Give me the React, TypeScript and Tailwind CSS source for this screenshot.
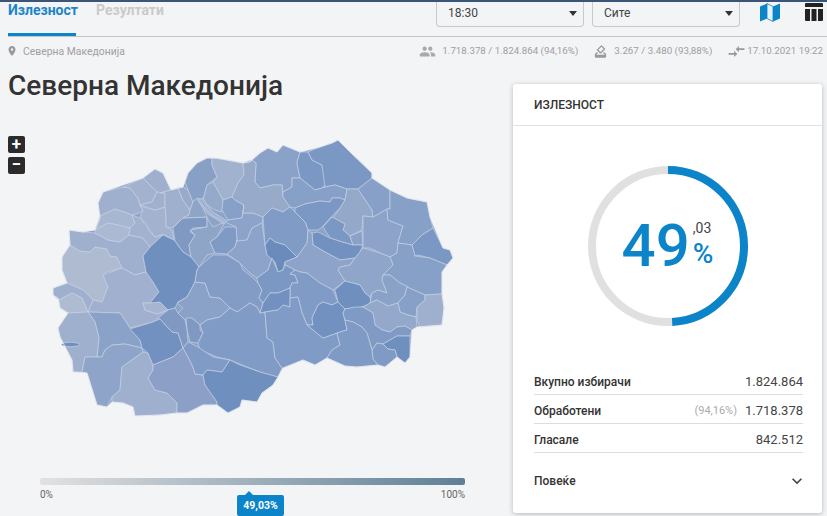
import { MdPlace, MdPeople, MdHowToVote, MdCompareArrows, MdKeyboardArrowDown } from "react-icons/md";

const OUTLINE = "69,230 83,232 95,230 100,218 98,203 103,192 123,185 143,178 155,169 163,173 171,190 183,187 188,173 197,163 207,158 217,158 227,160 243,163 250,162 252,160 260,153 268,148 277,152 283,145 300,152 320,147 332,143 338,140 350,152 372,173 372,178 390,190 407,198 427,202 430,217 443,248 450,250 453,258 447,265 442,272 442,293 444,308 442,325 417,327 412,330 410,357 405,363 397,357 385,367 378,365 357,367 345,366 327,358 315,365 303,360 283,368 278,377 273,385 262,393 257,402 242,400 240,407 228,413 217,405 203,405 187,413 177,413 160,415 135,416 133,407 123,403 112,402 107,407 97,405 87,373 73,372 72,360 60,337 58,328 68,313 60,308 58,298 53,295 53,288 67,283 62,270 62,257 70,245";

const REGIONS: [string, string][] = [
  ["#aebbd1", "62,257 70,245 80,251 90,252 95,247 107,249 110,256 117,257 122,268 107,272 103,275 108,287 102,302 93,300 83,290 67,283 62,270"],
  ["#9fb0ce", "53,288 67,283 83,290 93,300 88,312 82,298 72,293 59,300 53,295"],
  ["#aebbd1", "59,300 72,293 82,298 88,312 68,313 60,308"],
  ["#9fb0ce", "69,230 83,232 95,233 108,240 120,242 129,235 143,238 150,247 143,256 146,272 135,275 122,268 117,257 110,256 107,249 95,247 90,252 80,251 70,245"],
  ["#a0b0ce", "103,275 122,268 135,275 146,272 153,282 159,292 150,303 143,303 145,310 157,314 168,310 159,318 153,322 130,328 120,313 88,312 93,300 102,302 108,287"],
  ["#a7b5d0", "143,303 150,303 160,302 168,310 157,314 145,310"],
  ["#9fb0ce", "98,203 103,192 123,187 130,188 138,198 140,205 143,210 140,213 132,215 127,213 115,209 100,216"],
  ["#a8b7d1", "100,216 115,209 127,213 132,215 135,223 130,228 118,225 108,223 95,230"],
  ["#acb9d2", "95,233 95,230 108,223 118,225 130,228 129,235 120,242 108,240"],
  ["#a3b2cf", "132,215 140,218 147,227 150,232 155,237 163,235 150,247 143,238 129,235 130,228 135,223"],
  ["#a3b2cf", "140,206 155,210 165,207 166,217 166,227 172,230 174,240 163,234 155,237 150,230 147,225 140,217 143,210"],
  ["#9fb0ce", "143,178 155,169 163,173 171,190 160,193 157,192"],
  ["#a3b3cf", "123,187 143,178 157,192 152,202 140,205 138,198 130,188"],
  ["#a0b0ce", "157,192 165,193 165,203 165,207 155,210 140,205 152,202"],
  ["#9fb0ce", "160,193 171,190 178,188 183,200 190,210 189,215 183,218 172,228 166,227 166,217 165,207 165,193"],
  ["#97aaca", "178,188 183,187 188,190 193,202 190,210 183,200"],
  ["#88a0c6", "188,173 197,163 207,158 212,158 212,165 217,177 207,185 203,200 197,198 193,202 188,190 185,182"],
  ["#a1b2cf", "212,158 227,160 243,163 244,175 238,183 232,197 223,200 213,182 217,177 212,165"],
  ["#95a9ca", "207,185 213,182 223,200 222,212 215,210 207,205 203,200"],
  ["#86a0c8", "223,200 232,197 235,200 244,205 242,218 228,220 222,210"],
  ["#7f99c3", "173,228 183,218 207,217 207,227 193,228 190,232 195,235 189,245 191,257 183,252 175,241"],
  ["#8fa5c8", "190,230 207,227 207,218 213,227 225,222 217,237 210,242 215,253 207,255 199,267 191,257 189,245 195,235"],
  ["#8fa5c8", "193,202 197,198 203,208 207,217 183,218 189,215 190,210"],
  ["#a3b2cf", "198,200 203,198 207,205 213,212 227,221 224,224 208,214 203,208"],
  ["#8ea3ca", "244,205 243,213 253,213 263,217 262,223 252,228 247,240 237,242 236,227 225,222 228,220 242,218"],
  ["#7f9ac4", "210,242 217,237 225,227 236,227 237,240 235,247 227,254 215,253"],
  ["#8ea3ca", "236,241 247,240 252,228 262,223 265,245 267,255 272,258 268,270 257,278 250,273 240,263 227,254 235,247 237,240"],
  ["#6f8fbf", "143,256 150,247 163,235 174,240 183,252 191,257 199,267 197,270 195,282 187,297 178,302 175,308 168,310 160,302 150,303 159,292 153,282 146,272"],
  ["#8aa2c8", "195,282 205,283 210,297 220,298 230,308 220,317 207,320 200,325 192,318 185,320 178,313 183,308 177,303 187,297"],
  ["#829cc6", "197,270 199,267 213,255 227,255 240,263 243,270 252,277 258,283 262,290 259,298 263,303 260,313 257,307 250,303 240,310 237,312 230,308 220,298 210,297 205,283 195,282"],
  ["#7f99c3", "186,318 192,318 200,325 200,330 203,333 198,343 190,342 187,330"],
  ["#809bc5", "230,308 237,312 250,303 257,307 260,313 265,312 267,338 273,342 275,358 282,368 278,377 270,375 260,372 247,367 230,360 217,357 200,350 198,343 203,333 200,325 207,320 220,317"],
  ["#8aa2c8", "88,312 120,313 130,328 140,340 142,348 125,344 112,345 105,350 102,357 97,357 99,338 95,322"],
  ["#9fb0ce", "68,313 88,312 95,322 99,338 97,357 85,357 82,372 73,372 72,360 60,337 58,328"],
  ["#8ea5c9", "85,357 102,357 105,350 112,345 125,344 142,348 143,352 122,367 120,390 112,397 107,407 97,405 87,373 82,372"],
  ["#9fb0ce", "122,367 143,352 148,353 153,365 153,370 148,378 155,390 167,393 177,403 177,413 160,415 135,416 133,407 123,403 112,402 112,397 120,390"],
  ["#7391c0", "130,329 153,322 160,319 172,332 178,333 183,348 173,357 153,365 148,353 142,348 140,340"],
  ["#7f99c3", "158,318 168,310 175,308 178,313 185,320 187,330 188,342 183,348 178,333 172,332 160,319"],
  ["#8c9fc6", "153,365 173,357 183,348 187,355 193,367 195,374 203,375 205,385 217,402 217,405 203,405 187,413 177,413 177,403 167,393 155,390 148,378 153,370"],
  ["#809bc5", "183,348 188,342 198,347 213,357 230,360 222,372 207,370 203,375 195,374 193,367 187,355"],
  ["#6f8fbf", "203,375 207,370 222,372 230,360 240,365 260,372 278,377 273,385 262,393 257,402 242,400 240,407 228,413 217,405 217,402 205,385"],
  ["#8aa2c8", "252,160 260,153 268,148 277,152 283,145 300,152 297,163 300,178 292,178 292,187 283,192 282,185 273,185 260,188 255,182 256,163"],
  ["#7b97c3", "300,152 308,152 312,160 322,165 327,183 322,188 315,190 300,178 297,163"],
  ["#7b97c3", "308,152 320,147 332,143 338,140 350,152 372,173 372,178 358,189 347,189 335,185 325,187 322,165 312,160"],
  ["#97aaca", "243,163 252,160 256,163 255,182 260,188 273,185 282,185 283,197 290,207 283,212 272,208 263,217 253,213 243,213 244,205 235,200 232,197 238,183 244,175"],
  ["#86a0c8", "283,192 292,187 292,178 300,178 315,190 322,188 325,187 335,185 347,189 345,200 340,198 332,198 330,202 320,201 305,204 295,208 290,207 283,197"],
  ["#7b97c3", "295,208 305,204 320,201 330,202 332,198 340,198 345,200 340,208 332,216 322,227 318,230 308,230 305,222 295,212"],
  ["#94a9ca", "347,189 358,189 372,210 373,217 363,216 362,230 350,236 343,230 345,224 333,218 340,208 345,200"],
  ["#7b97c3", "323,227 332,217 345,224 343,230 350,236 353,245 342,242 330,238"],
  ["#8ba2c8", "350,236 362,231 363,245 353,245"],
  ["#7391c0", "312,233 318,232 330,238 342,242 353,245 363,245 360,252 355,258 340,260 325,252 313,245"],
  ["#8ea3ca", "363,216 373,217 387,209 388,220 403,226 398,243 397,253 390,257 380,253 370,248 363,248"],
  ["#86a0c8", "372,178 390,190 390,209 387,209 373,217 372,210 358,189"],
  ["#86a0c8", "390,190 407,198 427,202 430,217 433,228 422,235 412,245 398,243 403,226 388,220 387,209 390,209"],
  ["#7b97c3", "433,228 443,248 450,250 453,258 447,265 430,258 418,255 415,256 412,245 422,235"],
  ["#86a0c8", "398,243 412,245 415,256 430,258 447,265 442,272 442,294 425,295 407,287 400,283 390,275 383,275 393,265 390,257 397,253"],
  ["#809bc5", "263,217 272,208 283,212 290,207 295,212 305,222 308,230 307,243 300,253 297,257 285,245 275,242 270,238 265,245"],
  ["#6b8bbd", "265,245 270,238 275,242 285,245 297,257 285,262 283,270 278,272 275,262 267,255"],
  ["#8ea3ca", "308,230 312,233 313,245 325,252 340,260 355,258 350,265 340,267 338,270 345,281 333,290 320,283 307,273 300,272 295,270 285,265 285,262 297,257 300,253 307,243"],
  ["#8fa6ca", "340,267 350,265 355,258 363,248 380,253 390,257 393,265 383,275 382,280 387,293 378,290 372,293 370,297 365,293 360,285 345,281 338,270"],
  ["#7b97c3", "257,278 268,270 272,258 278,272 283,270 285,265 295,270 290,274 295,275 298,283 292,283 290,288 278,293 270,293 263,303 259,298 262,290 258,283"],
  ["#809bc5", "295,270 300,272 307,273 320,283 333,290 338,302 332,305 323,302 318,305 312,318 313,325 307,325 302,313 298,297 290,298 290,288 292,283 298,283 295,275 290,274"],
  ["#7391c0", "263,303 270,293 278,293 290,288 290,298 290,307 283,305 278,310 265,312 260,313"],
  ["#809bc5", "290,298 298,297 302,313 307,325 323,338 337,333 340,345 332,350 327,358 315,365 303,360 283,368 282,368 275,358 273,342 267,338 265,312 278,310 283,305 290,307"],
  ["#7391c0", "318,305 312,318 313,325 307,325 323,338 337,333 347,330 345,320 343,313 345,309 338,302 332,305 323,302"],
  ["#6f8fbf", "335,290 345,281 360,285 365,293 370,297 371,303 362,307 353,308 345,309 338,302"],
  ["#8aa2c8", "370,303 372,293 378,290 387,293 382,280 383,275 390,275 400,283 407,286 405,295 398,303 388,306 377,300"],
  ["#86a0c8", "407,287 425,295 425,300 417,307 416,317 408,315 400,312 398,303 405,295"],
  ["#9fb0ce", "425,295 442,294 444,308 442,325 420,327 417,320 417,307 425,300"],
  ["#93a8ca", "363,307 370,303 377,300 388,306 398,303 400,312 408,315 416,317 417,327 412,330 405,326 397,327 390,332 382,330 375,325 373,313"],
  ["#7f9ac4", "345,309 355,307 363,307 373,313 375,325 382,330 390,332 397,327 405,326 412,330 410,336 397,336 383,344 377,343 372,350 367,333 362,327 353,322 345,320 343,313"],
  ["#6f8fbf", "383,344 397,336 410,336 410,357 405,363 397,357 395,350 388,349"],
  ["#7f9ac4", "372,350 377,343 383,344 388,349 395,350 397,357 385,367 378,365 373,359"],
  ["#7f9ac4", "345,320 353,322 362,327 367,333 372,350 373,359 378,365 357,367 345,366 327,358 332,350 340,345 337,333 347,330"],
];

function MapShape() {
  return (
    <svg width="513" height="335" viewBox="0 130 513 335" className="block">
      <polygon points={OUTLINE} fill="#8ea3ca" />
      {REGIONS.map(([fill, points], i) => (
        <polygon key={i} points={points} fill={fill} stroke="#c6d1e4" strokeWidth="0.7" strokeLinejoin="round" />
      ))}
      <ellipse cx="70.5" cy="344.5" rx="9" ry="2.2" fill="#6f8fbf" stroke="#d3dbe8" strokeWidth="0.6" />
      <polyline points="200,203 206,209 212,215 224,222" fill="none" stroke="#c6d1e4" strokeWidth="0.6" />
      <polygon points={OUTLINE} fill="none" stroke="#f3f4f6" strokeWidth="0.7" strokeLinejoin="round" />
    </svg>
  );
}

function Caret() {
  return <span className="w-0 h-0 border-x-[4px] border-x-transparent border-t-[5px] border-t-[#333]" />;
}

function Select({ label }: { label: string }) {
  return (
    <div className="w-[148px] h-[25px] border-x border-b border-[#c9c9c9] rounded-b-[4px] flex items-center justify-between pl-[11px] pr-[6px] pb-[2px] text-[12px] text-[#444]">
      <span>{label}</span>
      <Caret />
    </div>
  );
}

function Row({ label, value, note }: { label: string; value: string; note?: string }) {
  return (
    <div className="h-[29px] pt-[4px] border-b border-[#dddddd] flex items-center justify-between">
      <span className="text-[12px] font-medium text-[#333]">{label}</span>
      <span className="flex items-center gap-[8px]">
        {note && <span className="text-[11px] text-[#aaa]">{note}</span>}
        <span className="text-[13px] text-[#444]">{value}</span>
      </span>
    </div>
  );
}

export default function App() {
  return (
    <div className="w-[827px] h-[516px] overflow-hidden bg-[#f3f4f6] flex flex-col font-['Roboto',sans-serif]">
      <div className="h-[2px] bg-[#3b5478] shrink-0" />
      <div className="h-[35px] shrink-0 ml-[8px] border-b border-[#c4c4c4] flex justify-between">
        <div className="flex gap-[20px] text-[14px] font-bold">
          <div className="h-[34px] w-[68px] border-b-[3px] border-[#0b84c9] text-[#1a84c8] leading-[17px]">Излезност</div>
          <div className="text-[#cacaca] leading-[17px]">Резултати</div>
        </div>
        <div className="flex">
          <div className="flex gap-[8px]">
            <Select label="18:30" />
            <Select label="Сите" />
          </div>
          <svg width="20" height="19" viewBox="0 0 20 19" className="ml-[20px] mt-[1px]">
            <path d="M0 3.5 7 0.5V15.5L0 18.5Z M13 3.5 20 0.5V15.5L13 18.5Z" fill="#0b84c9" />
            <path d="M7 0.5 13 3.5V18.5L7 15.5Z" fill="#e8f2f9" stroke="#0b84c9" strokeWidth="0.8" />
          </svg>
          <svg width="18" height="18" viewBox="0 0 18 18" className="ml-[25px] mr-[4px] mt-[1px]">
            <path d="M1 0H17a1 1 0 0 1 1 1V4H0V1a1 1 0 0 1 1-1Z M0 6H5V18H1a1 1 0 0 1-1-1Z M6.5 6H11.5V18H6.5Z M13 6H18V17a1 1 0 0 1-1 1H13Z" fill="#222" />
          </svg>
        </div>
      </div>
      <div className="h-[29px] shrink-0 pl-[6px] pr-[4px] flex items-center justify-between text-[9.75px] text-[#a0a0a0]">
        <div className="flex items-center gap-[5px] text-[10.4px]">
          <MdPlace size={12} className="text-[#999]" />
          <span>Северна Македонија</span>
        </div>
        <div className="flex items-center">
          <MdPeople size={17} className="text-[#aaa] mr-[6px]" />
          <span>1.718.378 / 1.824.864 (94,16%)</span>
          <MdHowToVote size={15} className="text-[#999] ml-[15px] mr-[6px]" />
          <span>3.267 / 3.480 (93,88%)</span>
          <MdCompareArrows size={19} className="text-[#999] ml-[15px] mr-[1px]" />
          <span>17.10.2021 19:22</span>
        </div>
      </div>
      <div className="flex flex-1 min-h-0">
        <div className="w-[513px] shrink-0">
          <h1 className="pl-[8px] text-[28px] leading-[40px] font-medium text-[#333]">Северна Македонија</h1>
          <div className="relative mt-[24px]">
            <MapShape />
            <div className="absolute left-[8px] top-[6px] flex flex-col gap-[4px]">
              <div className="w-[17px] h-[17px] rounded-[2px] bg-[#2b2b2b] text-white text-[17px] leading-[16px] font-bold text-center">+</div>
              <div className="w-[17px] h-[17px] rounded-[2px] bg-[#2b2b2b] text-white text-[17px] leading-[15px] font-bold text-center">−</div>
            </div>
          </div>
          <div className="relative mx-[40px] mt-[13px] w-[425px]">
            <div className="h-[7px] rounded-[2px] bg-gradient-to-r from-[#e2e2e2] to-[#5f7f96]" />
            <div className="flex justify-between text-[10px] text-[#666] mt-[4px] leading-[12px]">
              <span>0%</span>
              <span>100%</span>
            </div>
            <div className="absolute left-[197px] top-[17px] w-[47px] h-[21px] bg-[#0b84c9] rounded-[2px] text-white text-[10.5px] font-bold flex items-center justify-center">
              49,03%
              <span className="absolute left-[8px] -top-[4px] w-0 h-0 border-x-[4px] border-x-transparent border-b-[4px] border-b-[#0b84c9]" />
            </div>
          </div>
        </div>
        <div className="w-[309px] h-[429px] mt-[18px] bg-white rounded-[3px] shadow-[0_1px_5px_rgba(0,0,0,0.25)]">
          <div className="h-[42px] border-b border-[#e2e2e2] pl-[21px] flex items-center text-[12px] font-medium text-[#333] pt-[1px]">ИЗЛЕЗНОСТ</div>
          <div className="h-[240px] relative flex items-center justify-center">
            <svg width="160" height="160" viewBox="0 0 160 160" className="absolute left-[75px] top-[40px]">
              <circle cx="80" cy="80" r="76" fill="none" stroke="#e0e0e0" strokeWidth="8" />
              <circle cx="80" cy="80" r="76" fill="none" stroke="#0b84c9" strokeWidth="8" strokeDasharray={`${2 * Math.PI * 76 * 0.4903} ${2 * Math.PI * 76}`} transform="rotate(-90 80 80)" />
            </svg>
            <div className="relative flex items-start text-[#0b84c9]">
              <span className="text-[60px] leading-[70px] font-medium">49</span>
              <span className="flex flex-col ml-[3px] mt-[9px]">
                <span className="text-[14px] leading-[16px] text-[#444]">,03</span>
                <span className="text-[28px] leading-[28px] font-medium mt-[4px]">%</span>
              </span>
            </div>
          </div>
          <div className="pl-[21px] pr-[19px]">
            <Row label="Вкупно избирачи" value="1.824.864" />
            <Row label="Обработени" value="1.718.378" note="(94,16%)" />
            <Row label="Гласале" value="842.512" />
            <div className="h-[55px] flex items-center justify-between">
              <span className="text-[12px] font-medium text-[#333]">Повеќе</span>
              <MdKeyboardArrowDown size={20} className="text-[#444] mr-[-4px]" />
            </div>
          </div>
        </div>
      </div>
    </div>
  );
}
